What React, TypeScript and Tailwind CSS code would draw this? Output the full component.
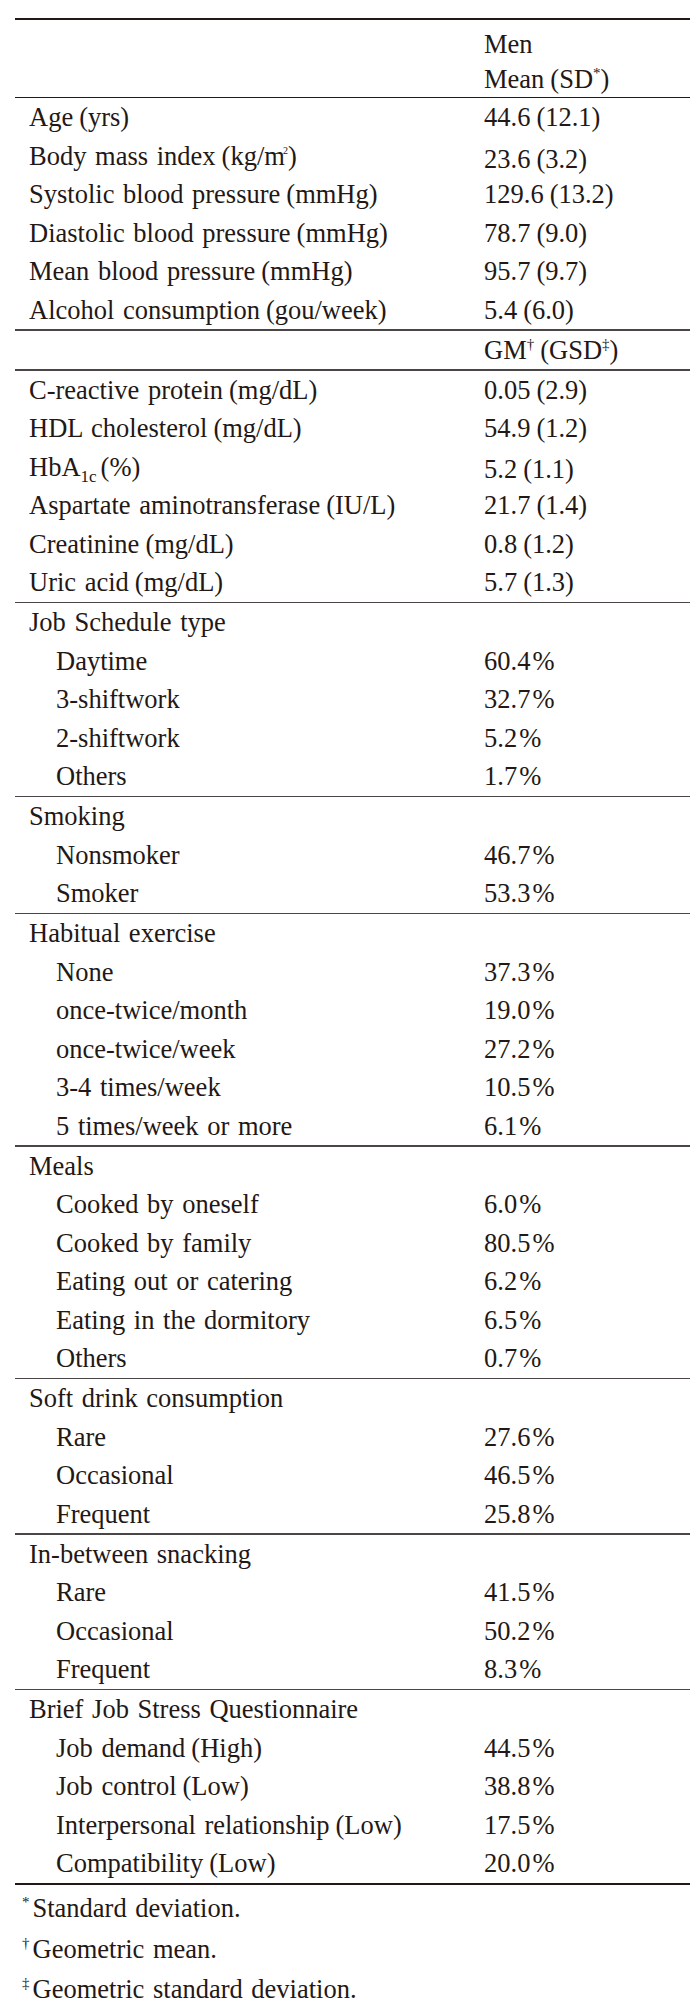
import React from 'react';

type Row = { label: React.ReactNode; value?: React.ReactNode; indent?: boolean };

const font = { fontFamily: '"Liberation Serif", "Noto Serif CJK JP", "Noto Sans CJK JP", serif' };

function Sup({ children }: { children: React.ReactNode }) {
  return <span className="relative -top-[10px] text-[15px]">{children}</span>;
}

// text with a bracketed unit: keep a small fixed gap before the bracket
function T({ s }: { s: string }) {
  const i = s.indexOf(' (');
  if (i < 0) return <>{s}</>;
  return (
    <>
      {s.slice(0, i)}
      <span className="ml-[6px]">{s.slice(i + 1)}</span>
    </>
  );
}

function Pct({ v }: { v: string }) {
  return (
    <span>
      {v}
      <span className="ml-[2px]">%</span>
    </span>
  );
}

function TableRow({ label, value, indent }: Row) {
  return (
    <div className="grid h-[38.5px] grid-cols-[469px_1fr] items-center leading-[38.5px]">
      <div className={indent ? 'pl-[41px]' : 'pl-[14px]'}>{typeof label === 'string' ? <T s={label} /> : label}</div>
      <div>{typeof value === 'string' ? <T s={value} /> : value}</div>
    </div>
  );
}

const Thin = () => <div className="h-[1.5px] bg-[#4a4546]" />;

const block1: Row[] = [
  { label: 'Age (yrs)', value: '44.6 (12.1)' },
  {
    label: (
      <>
        Body mass index<span className="ml-[6px]">(kg/m</span>
        <span className="relative -top-[11px] -ml-[2px] text-[10px]">2</span>)
      </>
    ),
    value: '23.6 (3.2)',
  },
  { label: 'Systolic blood pressure (mmHg)', value: '129.6 (13.2)' },
  { label: 'Diastolic blood pressure (mmHg)', value: '78.7 (9.0)' },
  { label: 'Mean blood pressure (mmHg)', value: '95.7 (9.7)' },
  { label: 'Alcohol consumption (gou/week)', value: '5.4 (6.0)' },
];

const block2: Row[] = [
  { label: 'C-reactive protein (mg/dL)', value: '0.05 (2.9)' },
  { label: 'HDL cholesterol (mg/dL)', value: '54.9 (1.2)' },
  {
    label: (
      <>
        HbA<span className="relative top-[6px] text-[17px]">1c</span>
        <span className="ml-[4px]">(%)</span>
      </>
    ),
    value: '5.2 (1.1)',
  },
  { label: 'Aspartate aminotransferase (IU/L)', value: '21.7 (1.4)' },
  { label: 'Creatinine (mg/dL)', value: '0.8 (1.2)' },
  { label: 'Uric acid (mg/dL)', value: '5.7 (1.3)' },
];

const groups: { title: string; items: [string, string][] }[] = [
  {
    title: 'Job Schedule type',
    items: [
      ['Daytime', '60.4'],
      ['3-shiftwork', '32.7'],
      ['2-shiftwork', '5.2'],
      ['Others', '1.7'],
    ],
  },
  {
    title: 'Smoking',
    items: [
      ['Nonsmoker', '46.7'],
      ['Smoker', '53.3'],
    ],
  },
  {
    title: 'Habitual exercise',
    items: [
      ['None', '37.3'],
      ['once-twice/month', '19.0'],
      ['once-twice/week', '27.2'],
      ['3-4 times/week', '10.5'],
      ['5 times/week or more', '6.1'],
    ],
  },
  {
    title: 'Meals',
    items: [
      ['Cooked by oneself', '6.0'],
      ['Cooked by family', '80.5'],
      ['Eating out or catering', '6.2'],
      ['Eating in the dormitory', '6.5'],
      ['Others', '0.7'],
    ],
  },
  {
    title: 'Soft drink consumption',
    items: [
      ['Rare', '27.6'],
      ['Occasional', '46.5'],
      ['Frequent', '25.8'],
    ],
  },
  {
    title: 'In-between snacking',
    items: [
      ['Rare', '41.5'],
      ['Occasional', '50.2'],
      ['Frequent', '8.3'],
    ],
  },
  {
    title: 'Brief Job Stress Questionnaire',
    items: [
      ['Job demand (High)', '44.5'],
      ['Job control (Low)', '38.8'],
      ['Interpersonal relationship (Low)', '17.5'],
      ['Compatibility (Low)', '20.0'],
    ],
  },
];

export default function App() {
  return (
    <div
      className="min-h-[2011px] w-[700px] bg-white pt-[18px] text-[26.5px] text-[#231815] [word-spacing:2px]"
      style={font}
    >
      <div className="ml-[15px] w-[675px]">
        <div className="h-[2px] bg-[#231815]" />
        <div className="h-[77px] pt-[7px]">
          <div className="grid h-[35px] grid-cols-[469px_1fr] items-center leading-[35px]">
            <div />
            <div>Men</div>
          </div>
          <div className="grid h-[35px] grid-cols-[469px_1fr] items-center leading-[35px]">
            <div />
            <div>
              Mean<span className="ml-[6px]">(SD</span>
              <Sup>*</Sup>)
            </div>
          </div>
        </div>
        <div className="h-px bg-[#231815]" />
        {block1.map((r, i) => (
          <TableRow key={i} {...r} />
        ))}
        <Thin />
        <TableRow
          label=""
          value={
            <>
              GM<Sup>†</Sup>
              <span className="ml-[6px]">(GSD</span>
              <Sup>‡</Sup>)
            </>
          }
        />
        <Thin />
        {block2.map((r, i) => (
          <TableRow key={i} {...r} />
        ))}
        {groups.map((g) => (
          <div key={g.title}>
            <Thin />
            <TableRow label={g.title} />
            {g.items.map(([l, v], i) => (
              <TableRow key={i} indent label={l} value={<Pct v={v} />} />
            ))}
          </div>
        ))}
        <div className="h-[2.5px] bg-[#231815]" />
      </div>
      <div className="pt-[5px] pl-[22px] leading-[36.5px]">
        <div>
          <Sup>*</Sup>
          <span className="ml-[3px]">Standard deviation.</span>
        </div>
        <div>
          <Sup>†</Sup>
          <span className="ml-[3px]">Geometric mean.</span>
        </div>
        <div>
          <Sup>‡</Sup>
          <span className="ml-[3px]">Geometric standard deviation.</span>
        </div>
      </div>
    </div>
  );
}
